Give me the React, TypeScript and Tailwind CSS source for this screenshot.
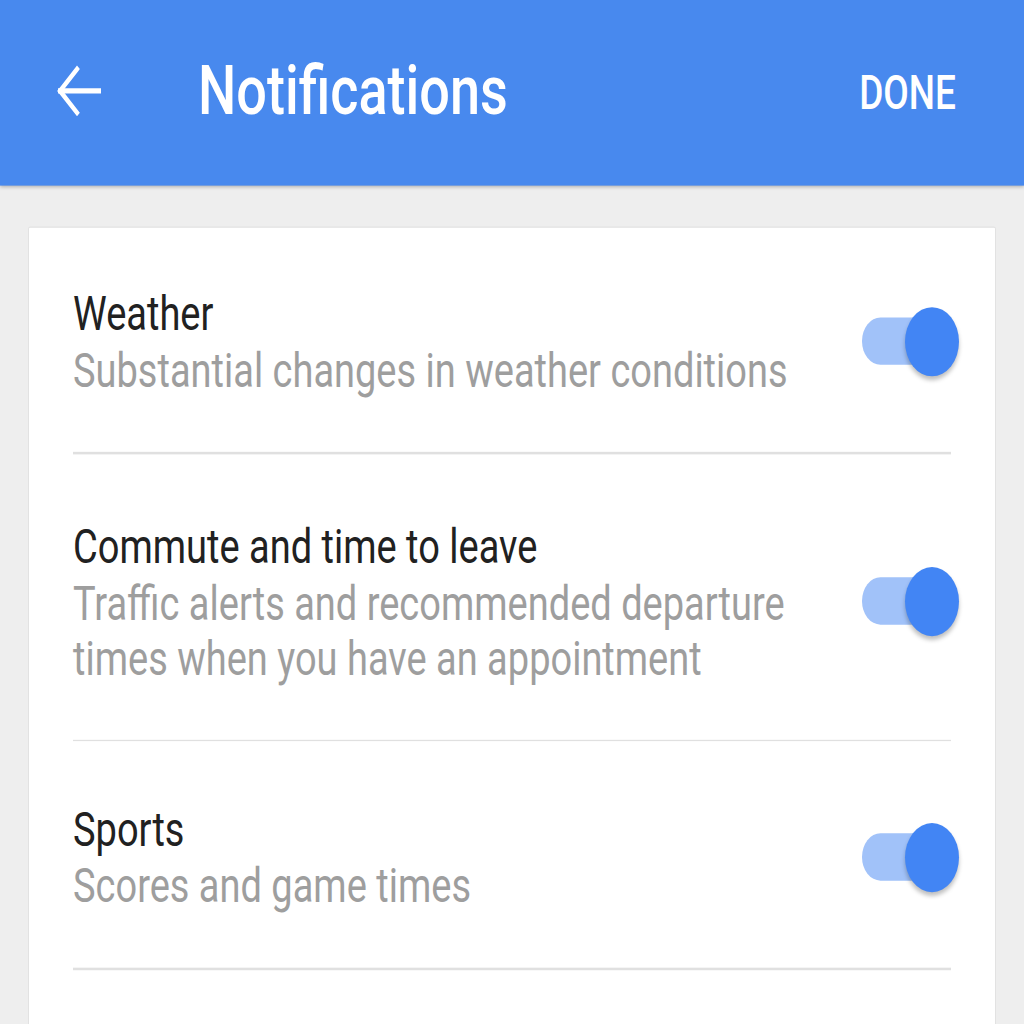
import React from 'react';

type Item = { title: string; subtitle: string; top: string };

const items: Item[] = [
    { title: 'Weather', subtitle: 'Substantial changes in weather conditions', top: 'pt-[44px]' },
    { title: 'Commute and time to leave', subtitle: 'Traffic alerts and recommended departure times when you have an appointment', top: 'pt-[49px]' },
    { title: 'Sports', subtitle: 'Scores and game times', top: 'pt-[46px]' },
];

function BackArrow() {
    return (
        <svg width="46" height="46" viewBox="0 0 46 46" fill="none" stroke="white" strokeWidth="4" strokeLinecap="square">
            <path d="M44 23H5" />
            <path d="M22 6L5 23l17 17" />
        </svg>
    );
}

function Toggle() {
    return (
        <div className="relative w-[97px] h-[54px] -mr-[8px] flex items-center shrink-0">
            <div className="w-[80px] h-[37px] rounded-full bg-[#a1c2f9]" />
            <div className="absolute right-0 top-0 w-[54px] h-[54px] rounded-full bg-[#4285f4] shadow-[0_3px_4px_rgba(0,0,0,0.25)]" />
        </div>
    );
}

function Row({ item }: { item: Item }) {
    return (
        <div className={item.top}>
            <div className="flex items-center justify-between">
                <div className="w-[770px]">
                    <div className="text-[38px] leading-[46px] text-[#212121]">{item.title}</div>
                    <div className="text-[38px] leading-[43px] text-[#9e9e9e]">{item.subtitle}</div>
                </div>
                <Toggle />
            </div>
            <div className="mt-[42px] h-[1.5px] bg-[#e0e0e0]" />
        </div>
    );
}

export default function App() {
    return (
        <div className="w-[1024px] h-[1024px] overflow-hidden bg-[#eeeeee]" style={{ fontFamily: 'Roboto, "Noto Sans", sans-serif' }}>
            {/* page is stretched vertically in the shot */}
            <div className="h-[800px] origin-top scale-y-[1.28]">
                {/* Toolbar */}
                <div className="h-[145px] bg-[#4889ee] flex items-center pl-[55px] pr-[68px] shadow-[0_1px_3px_rgba(0,0,0,0.25)]">
                    <div className="-mt-[3px]">
                        <BackArrow />
                    </div>
                    <h1 className="ml-[97px] text-[54px] font-medium text-white leading-none -mt-[4px]">Notifications</h1>
                    <div className="ml-auto text-[37px] font-medium text-white leading-none">DONE</div>
                </div>

                {/* Card */}
                <div className="mt-[32px] mx-[28px] bg-white border border-[#e2e2e2] rounded-[2px] pl-[44px] pr-[44px] h-[700px]">
                    {items.map((it) => (
                        <Row key={it.title} item={it} />
                    ))}
                </div>
            </div>
        </div>
    );
}
